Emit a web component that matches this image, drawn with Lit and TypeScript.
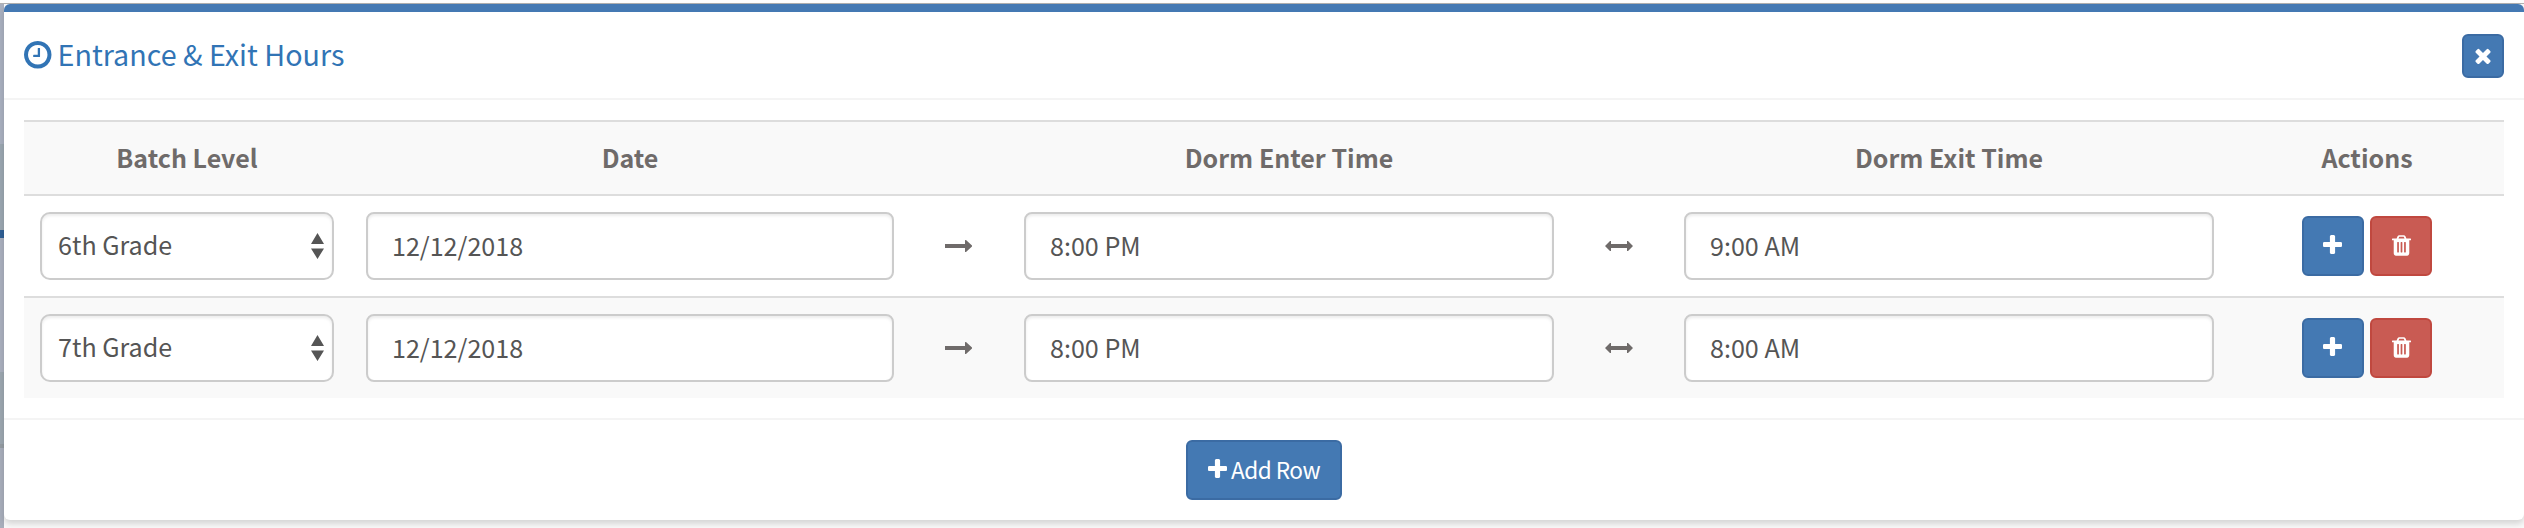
import { LitElement, html, css, svg } from "lit";
import { customElement, state } from "lit/decorators.js";

interface Row { level: string; date: string; enter: string; exit: string; }

const glyph = (name: string, box: string, d: string) =>
  html`<svg class="icon ${name}" viewBox=${box} aria-hidden="true">${svg`<path fill="currentColor" fill-rule="evenodd" d=${d} />`}</svg>`;

const PLUS = "M1408 800v192q0 40-28 68t-68 28H896v416q0 40-28 68t-68 28H608q-40 0-68-28t-28-68v-416H96q-40 0-68-28T0 992V800q0-40 28-68t68-28h416V288q0-40 28-68t68-28h192q40 0 68 28t28 68v416h416q40 0 68 28t28 68z";
const TIMES = "M1298 1322q0 40-28 68l-136 136q-28 28-68 28t-68-28l-294-294-294 294q-28 28-68 28t-68-28l-136-136q-28-28-28-68t28-68l294-294-294-294q-28-28-28-68t28-68l136-136q28-28 68-28t68 28l294 294 294-294q28-28 68-28t68 28l136 136q28 28 28 68t-28 68l-294 294 294 294q28 28 28 68z";
const CLOCK = "M896 544v448q0 14-9 23t-23 9H544q-14 0-23-9t-9-23v-64q0-14 9-23t23-9h224V544q0-14 9-23t23-9h64q14 0 23 9t9 23zM1312 896q0-148-73-273t-198-198-273-73-273 73-198 198-73 273 73 273 198 198 273 73 273-73 198-198 73-273zM1536 896q0 209-103 385.500t-279.500 279.500-385.500 103-385.500-103-279.500-279.500-103-385.500 103-385.500 279.500-279.500 385.500-103 385.500 103 279.500 279.500 103 385.500z";
const TRASH = "M512 1376V672q0-14-9-23t-23-9h-64q-14 0-23 9t-9 23v704q0 14 9 23t23 9h64q14 0 23-9t9-23zM768 1376V672q0-14-9-23t-23-9h-64q-14 0-23 9t-9 23v704q0 14 9 23t23 9h64q14 0 23-9t9-23zM1024 1376V672q0-14-9-23t-23-9h-64q-14 0-23 9t-9 23v704q0 14 9 23t23 9h64q14 0 23-9t9-23zM480 384h448l-48-117q-7-9-17-11H546q-10 2-17 11zM1408 416v64q0 14-9 23t-23 9h-96v948q0 83-47 143.500t-113 60.500H288q-66 0-113-58.500T128 1464V512H32q-14 0-23-9t-9-23v-64q0-14 9-23t23-9h309l70-167q15-37 54-63t79-26h320q40 0 79 26t54 63l70 167h309q14 0 23 9t9 23z";

@customElement("app-root")
export class AppRoot extends LitElement {
  @state() private rows: Row[] = [
    { level: "6th Grade", date: "12/12/2018", enter: "8:00 PM", exit: "9:00 AM" },
    { level: "7th Grade", date: "12/12/2018", enter: "8:00 PM", exit: "8:00 AM" },
  ];

  static styles = css`
    :host { display: block; height: 528px; overflow: hidden; box-sizing: border-box; padding: 4px 0 0 4px;
      background:
        linear-gradient(#fdfdfd 3px, #b0b0b0 3px, #b0b0b0 4px, transparent 4px),
        linear-gradient(#a9b0bf 0 144px, #9ba7b1 144px 230px, #2f5f95 230px 238px, #aab0be 238px 372px, #9ca7b0 372px 444px, #949ca3 444px 448px, #a8aebb 448px) 0 0 / 4px 100% no-repeat,
        #fafafa;
      font: 25.1px/40px "Noto Sans CJK SC", "Open Sans", sans-serif; color: #555; }
    *, *::before { box-sizing: border-box; }
    .panel { height: 516px; background: #fff; border-top: 8px solid #4479b3; border-radius: 6px; box-shadow: 0 4px 6px rgba(0,0,0,.15); }
    .header { display: flex; align-items: center; justify-content: space-between; height: 88px; padding: 2px 20px 0; border-bottom: 2px solid #f4f4f4; }
    .title { display: flex; align-items: center; gap: 6px; margin: 0; padding-bottom: 3px; font-size: 28.7px; font-weight: 400; line-height: 40px; color: #3174b5; }
    .title .label { padding-bottom: 1px; }
    .icon { display: block; flex: none; overflow: visible; }
    .clock { width: 27.500px; height: 27.500px; }
    .plus { width: 19px; height: 19px; margin: 0 1px 3px 0; }
    .times { width: 16px; height: 16px; }
    .trash { width: 19px; height: 21px; margin-bottom: 1px; }
    .arrow { width: 27px; height: 12px; margin-right: 1px; color: #6f6b6a; }
    .both { width: 28px; height: 10px; color: #6f6b6a; }
    .btn { display: flex; align-items: center; justify-content: center; gap: 4px; padding: 0; width: 62px; height: 60px;
      border: 2px solid #3b6ba3; border-radius: 6px; background: #4479b3; color: #fff; font: inherit; line-height: 40px; }
    .danger { background: #c95b53; border-color: #c0483f; }
    .close { width: 42px; height: 44px; }
    .add { width: 156px; gap: 3px; font-size: 22.6px; letter-spacing: -0.5px; }
    .add .label { padding-bottom: 1px; }
    .body { padding: 20px; }
    .row { display: grid; grid-template-columns: 326px 560px 98px 562px 98px 562px 1fr; align-items: center; height: 102px; border-top: 2px solid #ddd; }
    .row:nth-child(odd) { background: #f9f9f9; }
    .row.head { height: 74px; padding-bottom: 2px; color: #6f6b6a; font-size: 25px; font-weight: 700; text-align: center; }
    .cell { padding: 0 16px; }
    .center { display: flex; justify-content: center; gap: 6px; }
    .field { display: block; width: 100%; height: 68px; margin: 0; padding: 0 24px 3px; border: 2px solid #ccc; border-radius: 8px;
      background: #fff; box-shadow: inset 0 2px 3px rgba(0,0,0,.075); color: #555; font: inherit; line-height: 40px; outline: 0; }
    .select { display: flex; align-items: center; justify-content: space-between; padding: 0 8px 0 16px; border-radius: 10px; }
    .value { padding-bottom: 4px; }
    .updown { width: 13px; height: 26px; }
    .footer { display: flex; justify-content: center; padding: 20px 0; border-top: 2px solid #f4f4f4; }
  `;

  private addRow() { this.rows = [...this.rows, { ...this.rows[this.rows.length - 1] }]; }
  private remove(i: number) { this.rows = this.rows.filter((_, n) => n !== i); }

  render() {
    return html`
      <section class="panel">
        <header class="header">
          <h3 class="title">${glyph("clock", "0 128 1536 1536", CLOCK)}<span class="label">Entrance &amp; Exit Hours</span></h3>
          <button class="btn close" aria-label="Close">${glyph("times", "110 302 1188 1252", TIMES)}</button>
        </header>
        <div class="body">
          <div class="row head">
            <div>Batch Level</div><div>Date</div><div></div><div>Dorm Enter Time</div><div></div><div>Dorm Exit Time</div><div>Actions</div>
          </div>
          ${this.rows.map((r, i) => html`
            <div class="row">
              <div class="cell"><div class="field select" role="combobox"><span class="value">${r.level}</span>
                ${glyph("updown", "0 0 13 26", "M6.500 0L13 11H0zM0 15.500H13L6.500 26z")}</div></div>
              <div class="cell"><input class="field" .value=${r.date} /></div>
              <div class="center">${glyph("arrow", "0 0 27 12", "M0 4H20V0.500Q20 0 20.500 0H21L27 5.500V6.500L21 12H20.500Q20 12 20 11.500V8H0z")}</div>
              <div class="cell"><input class="field" .value=${r.enter} /></div>
              <div class="center">${glyph("both", "0 0 28 10", "M0 5L5 0H6V3H22V0H23L28 5L23 10H22V7H6V10H5z")}</div>
              <div class="cell"><input class="field" .value=${r.exit} /></div>
              <div class="center">
                <button class="btn" aria-label="Add" @click=${this.addRow}>${glyph("plus", "0 192 1408 1408", PLUS)}</button>
                <button class="btn danger" aria-label="Delete" @click=${() => this.remove(i)}>${glyph("trash", "0 128 1408 1536", TRASH)}</button>
              </div>
            </div>`)}
        </div>
        <footer class="footer"><button class="btn add" @click=${this.addRow}>${glyph("plus", "0 192 1408 1408", PLUS)}<span class="label">Add Row</span></button></footer>
      </section>`;
  }
}
